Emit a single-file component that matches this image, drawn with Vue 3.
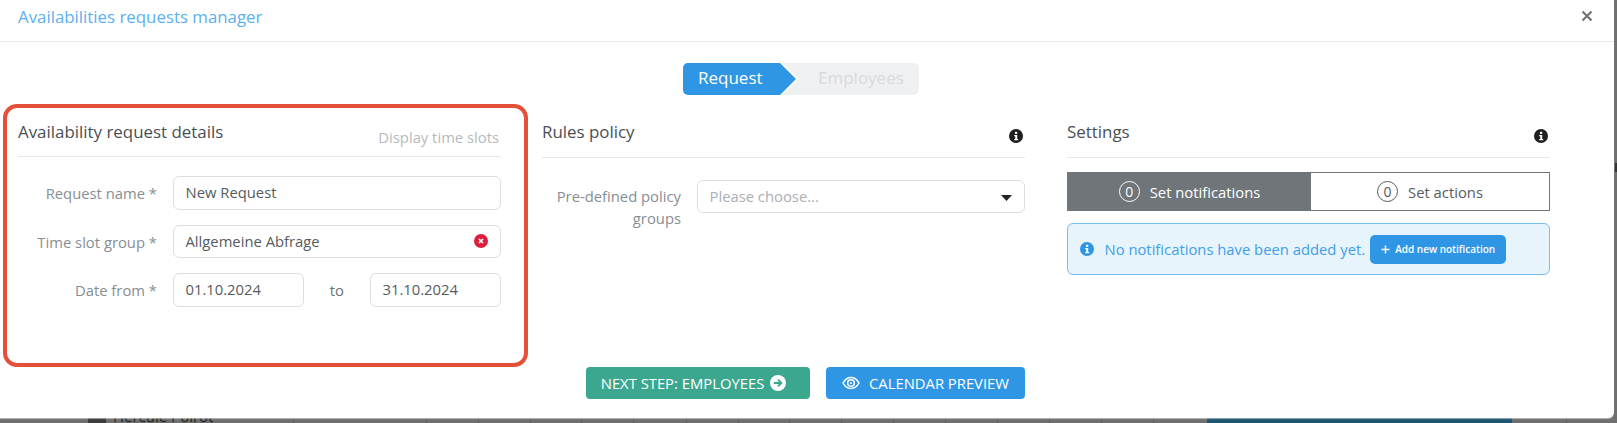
<script setup>
const lower = [
  { left: 478 }, { left: 530 }, { left: 581 }, { left: 633 }, { left: 686 }, { left: 738 }, { left: 789 },
  { left: 841 }, { left: 893 }, { left: 945 }, { left: 997 }, { left: 1049 }, { left: 1101 }, { left: 1153 },
  { left: 1566 }, { left: 293 }, { left: 426 }
];
</script>

<template>
  <div class="page">
    <div class="strip">
      <i v-for="c in lower" :key="c.left" class="sep" :style="{ left: c.left + 'px' }"></i>
      <span class="avatar"></span>
      <span class="peek">Hercule Poirot</span>
      <span class="teal"></span>
    </div>
    <i class="edge-mark"></i>
    <section class="modal">
      <header class="head">
        <span class="title">Availabilities requests manager</span>
        <svg class="close" viewBox="0 0 12 12" width="12" height="12"><path d="M1.5 1.5l9 9M10.500 1.500l-9 9" stroke="#6f7579" stroke-width="2.200" /></svg>
      </header>
      <div class="steps">
        <div class="step active">Request</div>
        <div class="step idle">Employees</div>
      </div>
      <div class="columns">
        <div class="col first">
          <div class="col-head">
            <h3>Availability request details</h3>
            <span class="slots">Display time slots</span>
          </div>
          <div class="row">
            <label>Request name *</label>
            <div class="input">New Request</div>
          </div>
          <div class="row">
            <label>Time slot group *</label>
            <div class="input spread">
              Allgemeine Abfrage
              <svg viewBox="0 0 14 14" width="14" height="14"><circle cx="7" cy="7" r="7" fill="#dc1f3c" /><path d="M5 5l4 4M9 5l-4 4" stroke="#fff" stroke-width="1.600" /></svg>
            </div>
          </div>
          <div class="row">
            <label>Date from *</label>
            <div class="dates">
              <div class="input">01.10.2024</div>
              <span class="to">to</span>
              <div class="input">31.10.2024</div>
            </div>
          </div>
        </div>
        <div class="col second">
          <div class="col-head tall">
            <h3>Rules policy</h3>
            <svg class="info" viewBox="0 0 14 14" width="14" height="14"><circle cx="7" cy="7" r="7" fill="#1f1f1f" /><rect x="6" y="2.800" width="2.200" height="2.100" fill="#fff" /><path d="M5.200 6h3v4h1v1.300H5.200V10h1V7.300h-1z" fill="#fff" /></svg>
          </div>
          <div class="row top">
            <label>Pre-defined policy groups</label>
            <div class="input spread placeholder">
              Please choose...
              <svg viewBox="0 0 11 6" width="11" height="6"><path d="M0 0h11L5.500 6z" fill="#222" /></svg>
            </div>
          </div>
        </div>
        <div class="col third">
          <div class="col-head tall">
            <h3>Settings</h3>
            <svg class="info" viewBox="0 0 14 14" width="14" height="14"><circle cx="7" cy="7" r="7" fill="#1f1f1f" /><rect x="6" y="2.800" width="2.200" height="2.100" fill="#fff" /><path d="M5.200 6h3v4h1v1.300H5.200V10h1V7.300h-1z" fill="#fff" /></svg>
          </div>
          <div class="tabs">
            <div class="tab on"><span class="count">0</span>Set notifications</div>
            <div class="tab"><span class="count">0</span>Set actions</div>
          </div>
          <div class="alert">
            <svg viewBox="0 0 14 14" width="14" height="14"><circle cx="7" cy="7" r="7" fill="#2f96e6" /><rect x="6" y="2.800" width="2.200" height="2.100" fill="#fff" /><path d="M5.200 6h3v4h1v1.300H5.200V10h1V7.300h-1z" fill="#fff" /></svg>
            <span class="alert-text">No notifications have been added yet.</span>
            <button class="add">
              <svg viewBox="0 0 10 10" width="9" height="9"><path d="M5 .5v9M.5 5h9" stroke="#fff" stroke-width="1.600" /></svg>
              Add new notification
            </button>
          </div>
        </div>
      </div>
      <div class="actions">
        <button class="btn green">
          NEXT STEP: EMPLOYEES
          <svg viewBox="0 0 16 16" width="16" height="16"><circle cx="8" cy="8" r="8" fill="#fff" /><path d="M3.800 8h7.400M8 4.600L11.400 8 8 11.400" fill="none" stroke="#3ca78f" stroke-width="1.800" /></svg>
        </button>
        <button class="btn blue">
          <svg viewBox="0 0 18 14" width="18" height="14"><path d="M1 7c2-3.600 4.800-5.500 8-5.500S15 3.400 17 7c-2 3.600-4.800 5.500-8 5.500S3 10.600 1 7z" fill="none" stroke="#fff" stroke-width="1.500" /><circle cx="9" cy="7" r="3.300" fill="none" stroke="#fff" stroke-width="1.500" /><circle cx="9" cy="7" r="1" fill="#fff" /></svg>
          CALENDAR PREVIEW
        </button>
      </div>
    </section>
    <div class="highlight"></div>
  </div>
</template>

<style>
html, body { margin: 0; padding: 0; background: #6f6f6f; overflow: hidden; }
</style>

<style scoped>
* { box-sizing: border-box; }
.page { position: relative; width: 1617px; height: 423px; font-family: "Open Sans", "Liberation Sans", sans-serif; overflow: hidden; background: #6f6f6f; }
.strip { position: absolute; left: 0; right: 0; top: 418px; height: 5px; }
.sep { position: absolute; top: 0; width: 1px; height: 5px; background: #5e5e5e; }
.avatar { position: absolute; left: 88px; width: 18px; top: 0; height: 5px; background: #3c3c3c; }
.peek { position: absolute; left: 113px; top: -11px; font-size: 15px; line-height: 18px; color: #222; white-space: nowrap; }
.teal { position: absolute; left: 1207px; width: 305px; top: 0; height: 5px; background: #1e546e; }
.edge-mark { position: absolute; left: 1615px; top: 163px; width: 2px; height: 9px; background: #333; }
.modal { position: absolute; left: 0; top: 0; width: 1614px; height: 418px; background: #fff; border-bottom-right-radius: 6px; box-shadow: 0 1px 1px rgba(255,255,255,.5); }
.head { height: 42px; border-bottom: 1px solid #e6e8e9; display: flex; justify-content: space-between; align-items: center; padding: 0 21px 0 18px; }
.title { font-size: 16.850px; color: #5cb0f0; margin-bottom: 9px; }
.close { margin-bottom: 9px; }
.steps { display: flex; justify-content: center; margin-top: 21px; height: 32px; padding-right: 12px; }
.step { height: 32px; font-size: 17px; line-height: 30px; }
.active { width: 113px; background: #2f96e6; color: #fff; padding-left: 15px; border-radius: 5px 0 0 5px; clip-path: polygon(0 0, 97px 0, 113px 50%, 97px 100%, 0 100%); z-index: 1; }
.idle { width: 136px; margin-left: -13px; background: #eff0f2; color: #d8dadd; padding-left: 35px; border-radius: 0 5px 5px 0; clip-path: polygon(0 0, 100% 0, 100% 100%, 0 100%, 16px 50%); }
.columns { display: flex; padding: 19px 0 0 18px; height: 272px; }
.col { display: flex; flex-direction: column; width: 483px; }
.second { margin-left: 41px; }
.third { margin-left: 42px; }
.col-head { height: 43px; border-bottom: 1px solid #e6e8e9; display: flex; justify-content: space-between; align-items: flex-start; margin-bottom: 19px; }
.col-head.tall { height: 44px; margin-bottom: 22px; }
.third .col-head.tall { margin-bottom: 14px; }
.col-head h3 { margin: 6px 0 0; font-size: 16.900px; line-height: 24px; font-weight: 400; color: #4a4f54; }
.slots { font-size: 14.800px; line-height: 20px; color: #b4babd; margin: 13px 2px 0 0; }
.info { margin: 15px 2px 0 0; }
.row { display: flex; align-items: center; margin-bottom: 15px; }
.row.top { align-items: flex-start; }
label { width: 139px; flex: none; margin-right: 15.500px; text-align: right; font-size: 14.800px; line-height: 21.500px; color: #878e93; padding-top: 2px; }
.top label { padding-top: 6px; }
.input { flex: 1; height: 33.500px; border: 1px solid #dcdfe1; border-radius: 6px; padding: 0 12px; font-size: 14.800px; line-height: 30px; color: #555b60; background: #fff; }
.spread { display: flex; justify-content: space-between; align-items: center; }
.placeholder { color: #a9afb3; height: 33px; padding-bottom: 2px; }
.placeholder svg { margin-top: 5px; }
.dates { flex: 1; display: flex; align-items: center; }
.dates .input { flex: none; width: 131.500px; }
.to { flex: 1; text-align: center; font-size: 14.800px; color: #6c7276; }
.tabs { display: flex; height: 39px; border: 1px solid #6f7579; }
.tab { flex: 1; display: flex; justify-content: center; align-items: center; gap: 10px; font-size: 14.800px; color: #555b60; }
.tab.on { flex: 0 0 243px; background: #6f7579; color: #fff; font-weight: 500; }
.count { width: 21px; height: 21px; border: 1px solid currentColor; border-radius: 50%; display: flex; align-items: center; justify-content: center; font-size: 14px; font-weight: 400; }
.alert { display: flex; align-items: center; height: 52px; margin-top: 12px; padding: 0 10px 0 12px; background: #e8f4fb; border: 1px solid #76bdf2; border-radius: 6px; }
.alert-text { font-size: 14.800px; color: #3f9fe9; margin-left: 10.500px; }
.add { height: 29px; border: 0; border-radius: 5px; background: #2f96e6; color: #fff; font: 600 10px "Open Sans", sans-serif; margin-left: 5px; padding: 0 11px; display: flex; align-items: center; gap: 5px; }
.actions { display: flex; gap: 16px; padding-left: 586px; }
.btn { height: 32px; border: 0; border-radius: 4px; color: #fff; display: flex; align-items: center; justify-content: center; font: 400 14.800px "Open Sans", sans-serif; gap: 6px; }
.green { width: 224px; background: #3ca78f; padding-right: 15px; }
.blue { width: 199px; background: #2f96e6; gap: 9px; }
.highlight { position: absolute; left: 3px; top: 104px; width: 525px; height: 263px; border: 4px solid #e4503a; border-radius: 14px; pointer-events: none; }
</style>
